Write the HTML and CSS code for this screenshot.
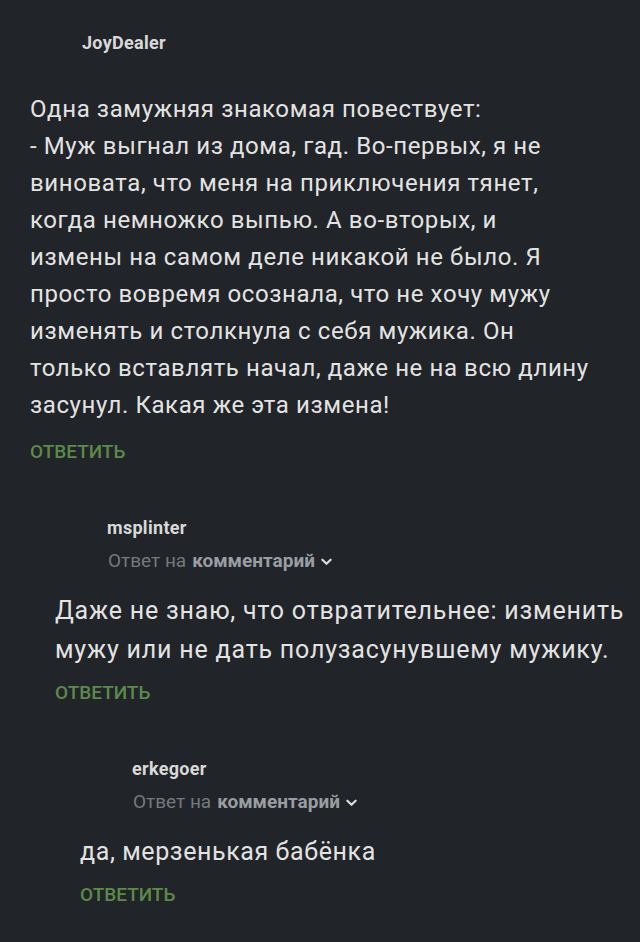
FILE: index.html
```html
<!DOCTYPE html>
<html lang="ru">

<head>
  <meta charset="UTF-8" />
  <meta name="viewport" content="width=device-width, initial-scale=1" />
  <title>Комментарии</title>
  <link rel="stylesheet" href="styles.css">
</head>

<body>
  <div class="thread">
    <div class="comment">
      <div class="author">JoyDealer</div>
      <p class="text">Одна замужняя знакомая повествует:<br>
        - Муж выгнал из дома, гад. Во-первых, я не<br>
        виновата, что меня на приключения тянет,<br>
        когда немножко выпью. А во-вторых, и<br>
        измены на самом деле никакой не было. Я<br>
        просто вовремя осознала, что не хочу мужу<br>
        изменять и столкнула с себя мужика. Он<br>
        только вставлять начал, даже не на всю длину<br>
        засунул. Какая же эта измена!</p>
      <a class="reply" href="#">Ответить</a>

      <div class="comment nested">
        <div class="author">msplinter</div>
        <div class="parent">Ответ на <b>комментарий</b>
          <svg class="chevron" viewBox="0 0 12 8" width="11" height="8"><path d="M1.5 1.5 6 6l4.5-4.5" fill="none" stroke="currentColor" stroke-width="2.4" stroke-linecap="round" stroke-linejoin="round"/></svg>
        </div>
        <p class="text">Даже не знаю, что отвратительнее: изменить<br>
          мужу или не дать полузасунувшему мужику.</p>
        <a class="reply" href="#">Ответить</a>

        <div class="comment nested">
          <div class="author">erkegoer</div>
          <div class="parent">Ответ на <b>комментарий</b>
            <svg class="chevron" viewBox="0 0 12 8" width="11" height="8"><path d="M1.5 1.5 6 6l4.5-4.5" fill="none" stroke="currentColor" stroke-width="2.4" stroke-linecap="round" stroke-linejoin="round"/></svg>
          </div>
          <p class="text">да, мерзенькая бабёнка</p>
          <a class="reply" href="#">Ответить</a>
        </div>
      </div>
    </div>
  </div>
</body>

</html>
```

FILE: styles.css
```css
* {
  margin: 0;
  padding: 0;
  box-sizing: border-box;
}

body {
  background: #212428;
  font-family: Roboto, 'Noto Sans', sans-serif;
  color: #e3e3e3;
  min-height: 100vh;
}

.thread {
  padding: 32px 0 0 30px;
}

.comment {
  display: flex;
  flex-direction: column;
  align-items: flex-start;
}

.nested {
  margin-top: 54px;
  padding-left: 25px;
}

.author {
  margin-left: 52px;
  font-size: 18px;
  line-height: 22px;
  font-weight: bold;
  letter-spacing: 0.3px;
  color: #d9d9d9;
}

.parent {
  margin-left: 53px;
  margin-top: 11px;
  font-size: 19px;
  line-height: 22px;
  color: #76797d;
  display: flex;
  align-items: center;
  gap: 6px;
}

.parent b {
  color: #9a9da1;
}

.chevron {
  color: #dcdcdc;
  margin-top: 1px;
}

.text {
  margin-top: 37px;
  font-size: 24px;
  line-height: 37px;
  letter-spacing: 0.6px;
  white-space: nowrap;
}

.nested .text {
  margin-top: 19px;
  font-size: 25px;
  line-height: 39px;
  letter-spacing: 0.8px;
}

.nested .nested .text {
  letter-spacing: 0.6px;
}

.reply {
  margin-top: 17px;
  font-size: 19px;
  line-height: 22px;
  font-weight: 500;
  text-transform: uppercase;
  text-decoration: none;
  color: #5c8a4a;
}

.nested .reply {
  margin-top: 13px;
}
```
